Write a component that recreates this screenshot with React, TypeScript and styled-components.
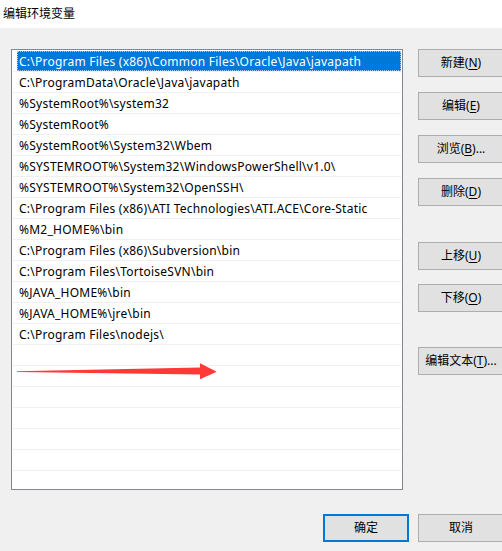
import React from "react";
import styled, { createGlobalStyle } from "styled-components";

const GlobalStyle = createGlobalStyle`
  html, body {
    margin: 0;
    padding: 0;
    background: #f0f0f0;
  }
  body {
    font-family: "Noto Sans", "Noto Sans CJK SC", sans-serif;
    font-size: 12px;
    color: #000;
  }
`;

const Window = styled.div`
  width: 502px;
  height: 551px;
  background: #f0f0f0;
  display: flex;
  flex-direction: column;
  overflow: hidden;
`;

const TitleBar = styled.div`
  height: 28px;
  background: #ffffff;
  display: flex;
  align-items: center;
  padding: 0 0 3px 3px;
  box-sizing: border-box;
  font-size: 12px;
`;

const Body = styled.div`
  display: flex;
  padding: 21px 0 0 11px;
`;

const ListBox = styled.div`
  position: relative;
  flex-shrink: 0;
  width: 392px;
  height: 441px;
  box-sizing: border-box;
  border: 1px solid #828790;
  background: #ffffff;
  padding: 1px 1px 0 1px;
  overflow: hidden;
`;

const Row = styled.div`
  height: 21px;
  box-sizing: border-box;
  border-bottom: 1px solid #f0f0f0;
  padding-left: 4px;
  display: flex;
`;

const RowInner = styled.div<{ $selected?: boolean }>`
  flex: 1;
  display: flex;
  align-items: center;
  padding-left: 2px;
  white-space: nowrap;
  letter-spacing: 0.24px;
  background: ${(p) => (p.$selected ? "#0078d7" : "transparent")};
  color: ${(p) => (p.$selected ? "#ffffff" : "#000000")};
  outline: ${(p) => (p.$selected ? "1px dotted #a9c9ee" : "none")};
  outline-offset: -1px;
`;

const Arrow = styled.svg`
  position: absolute;
  left: 0;
  top: 0;
  pointer-events: none;
`;

const Side = styled.div`
  display: flex;
  flex-direction: column;
  flex-shrink: 0;
  margin-left: 15px;
`;

const Button = styled.button<{ $gap?: number; $primary?: boolean; $w?: number }>`
  width: ${(p) => p.$w ?? 86}px;
  height: 28px;
  margin-top: ${(p) => p.$gap ?? 0}px;
  box-sizing: border-box;
  background: #e1e1e1;
  border: ${(p) => (p.$primary ? "2px solid #0078d7" : "1px solid #adadad")};
  font-family: "Noto Sans", "Noto Sans CJK SC", sans-serif;
  font-size: 12px;
  color: #000;
  padding: 0 0 2px 0;
  display: flex;
  align-items: center;
  justify-content: center;
  white-space: nowrap;
  flex-shrink: 0;
`;

const Key = styled.span`
  text-decoration: underline;
  text-underline-offset: 2px;
`;

const Footer = styled.div`
  display: flex;
  padding: 24px 0 0 323px;
  gap: 9px;
`;

const paths = [
  "C:\\Program Files (x86)\\Common Files\\Oracle\\Java\\javapath",
  "C:\\ProgramData\\Oracle\\Java\\javapath",
  "%SystemRoot%\\system32",
  "%SystemRoot%",
  "%SystemRoot%\\System32\\Wbem",
  "%SYSTEMROOT%\\System32\\WindowsPowerShell\\v1.0\\",
  "%SYSTEMROOT%\\System32\\OpenSSH\\",
  "C:\\Program Files (x86)\\ATI Technologies\\ATI.ACE\\Core-Static",
  "%M2_HOME%\\bin",
  "C:\\Program Files (x86)\\Subversion\\bin",
  "C:\\Program Files\\TortoiseSVN\\bin",
  "%JAVA_HOME%\\bin",
  "%JAVA_HOME%\\jre\\bin",
  "C:\\Program Files\\nodejs\\",
];

const TOTAL_ROWS = 21;

export default function App() {
  const rows = Array.from({ length: TOTAL_ROWS }, (_, i) => paths[i] ?? "");

  return (
    <Window>
      <GlobalStyle />
      <TitleBar>编辑环境变量</TitleBar>
      <Body>
        <ListBox>
          {rows.map((p, i) => (
            <Row key={i}>
              <RowInner $selected={i === 0}>{p}</RowInner>
            </Row>
          ))}
          <Arrow width="392" height="441" viewBox="11 49 392 441">
            <polygon
              points="16,370.3 199,366.6 199,362.3 215.7,370.7 199,378.3 199,373.4 16,370.9"
              fill="#ff3838"
            />
          </Arrow>
        </ListBox>
        <Side>
          <Button>
            新建(<Key>N</Key>)
          </Button>
          <Button $gap={15}>
            编辑(<Key>E</Key>)
          </Button>
          <Button $gap={15}>
            浏览(<Key>B</Key>)...
          </Button>
          <Button $gap={15}>
            删除(<Key>D</Key>)
          </Button>
          <Button $gap={36}>
            上移(<Key>U</Key>)
          </Button>
          <Button $gap={14}>
            下移(<Key>O</Key>)
          </Button>
          <Button $gap={35}>
            编辑文本(<Key>T</Key>)...
          </Button>
        </Side>
      </Body>
      <Footer>
        <Button $primary $w={86}>确定</Button>
        <Button $w={86}>取消</Button>
      </Footer>
    </Window>
  );
}
